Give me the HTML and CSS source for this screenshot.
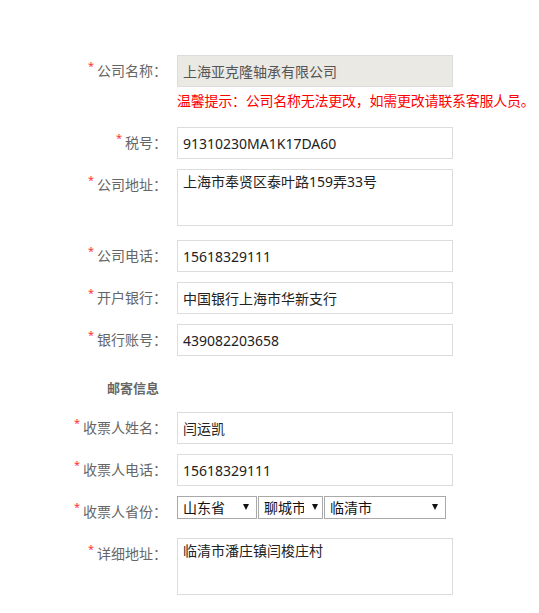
FILE: index.html
```html
<!DOCTYPE html>
<html lang="zh-CN">
<head>
  <meta charset="UTF-8">
  <title>开票信息</title>
  <link rel="stylesheet" href="styles.css">
</head>
<body>

  <div class="form">
    <div class="row">
      <label class="label"><i class="req">*</i>公司名称：</label>
      <div class="field">
        <input class="input" type="text" value="上海亚克隆轴承有限公司" disabled>
        <p class="tip">温馨提示：公司名称无法更改，如需更改请联系客服人员。</p>
      </div>
    </div>

    <div class="row">
      <label class="label"><i class="req">*</i>税号：</label>
      <div class="field"><input class="input" type="text" value="91310230MA1K17DA60"></div>
    </div>

    <div class="row row-area">
      <label class="label"><i class="req">*</i>公司地址：</label>
      <div class="field"><textarea class="area">上海市奉贤区泰叶路159弄33号</textarea></div>
    </div>

    <div class="row">
      <label class="label"><i class="req">*</i>公司电话：</label>
      <div class="field"><input class="input" type="text" value="15618329111"></div>
    </div>

    <div class="row">
      <label class="label"><i class="req">*</i>开户银行：</label>
      <div class="field"><input class="input" type="text" value="中国银行上海市华新支行"></div>
    </div>

    <div class="row">
      <label class="label"><i class="req">*</i>银行账号：</label>
      <div class="field"><input class="input" type="text" value="439082203658"></div>
    </div>

    <!-- 邮寄信息 -->
    <h3 class="section">邮寄信息</h3>

    <div class="row">
      <label class="label"><i class="req">*</i>收票人姓名：</label>
      <div class="field"><input class="input" type="text" value="闫运凯"></div>
    </div>

    <div class="row">
      <label class="label"><i class="req">*</i>收票人电话：</label>
      <div class="field"><input class="input" type="text" value="15618329111"></div>
    </div>

    <div class="row">
      <label class="label"><i class="req">*</i>收票人省份：</label>
      <div class="field selects">
        <span class="sel sel-prov"><select><option>山东省</option></select></span>
        <span class="sel sel-city"><select><option>聊城市</option></select></span>
        <span class="sel sel-area"><select><option>临清市</option></select></span>
      </div>
    </div>

    <div class="row">
      <label class="label"><i class="req">*</i>详细地址：</label>
      <div class="field"><textarea class="area">临清市潘庄镇闫梭庄村</textarea></div>
    </div>
  </div>

</body>
</html>
```

FILE: styles.css
```css
body {
  margin: 0;
  background-color: #ffffff;
  font-family: "Noto Sans", "Noto Sans CJK SC", sans-serif;
  font-size: 14px;
  color: #333;
}
.form {
  padding-top: 55px;
}
.row {
  display: grid;
  grid-template-columns: 167px auto;
  justify-content: start;
  column-gap: 10px;
  align-items: start;
  margin-bottom: 10px;
}
.row-area {
  margin-bottom: 14px;
}
.label {
  text-align: right;
  line-height: 32px;
  color: #666;
  white-space: nowrap;
}
.req {
  font-style: normal;
  color: #f33;
  font-size: 11px;
  vertical-align: top;
  line-height: 22px;
  margin-right: 3px;
}
.input {
  display: block;
  box-sizing: border-box;
  width: 276px;
  height: 32px;
  border: 1px solid #dcdcdc;
  padding: 0 5px;
  font-family: inherit;
  font-size: 14px;
  color: #222;
  background-color: #fff;
  outline: none;
}
.input:disabled {
  background-color: #ebe9e3;
  color: #555;
}
.tip {
  margin: 0 0 2px;
  line-height: 28px;
  color: #ff0000;
  letter-spacing: -0.25px;
  white-space: nowrap;
}
.area {
  display: block;
  box-sizing: border-box;
  width: 276px;
  height: 57px;
  border: 1px solid #dcdcdc;
  padding: 2px 5px;
  font-family: inherit;
  font-size: 14px;
  line-height: 20px;
  color: #222;
  resize: none;
  outline: none;
}
.section {
  margin: 0;
  padding: 4px 0 6px 107px;
  line-height: 36px;
  font-size: 13px;
  font-weight: bold;
  color: #666;
}
.selects {
  display: flex;
  gap: 1px;
}
.sel {
  position: relative;
  display: block;
}
.sel select {
  display: block;
  box-sizing: border-box;
  height: 23px;
  width: 100%;
  -webkit-appearance: none;
  appearance: none;
  border: 1px solid #a9a9a9;
  border-radius: 0;
  background-color: #fff;
  padding: 0 18px 0 5px;
  font-family: inherit;
  font-size: 14px;
  line-height: 21px;
  color: #111;
  outline: none;
}
.sel::after {
  content: "";
  position: absolute;
  right: 8px;
  top: 8px;
  border-left: 3.5px solid transparent;
  border-right: 3.5px solid transparent;
  border-top: 6px solid #111;
  pointer-events: none;
}
.sel-prov { width: 80px; }
.sel-city { width: 65px; }
.sel-area { width: 122px; }
.sel-city::after { right: 5px; }
```
